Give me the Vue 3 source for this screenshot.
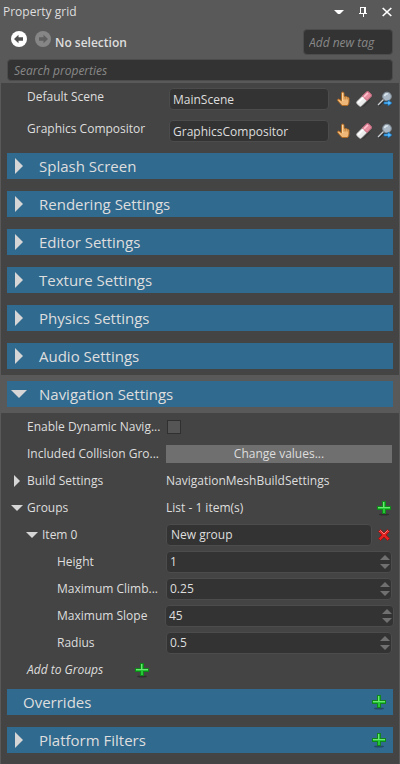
<script setup>
import { ref } from 'vue'

const references = ref([
  { id: 'scene', label: 'Default Scene', value: 'MainScene' },
  { id: 'compositor', label: 'Graphics Compositor', value: 'GraphicsCompositor' },
])
const collapsed = [
  'Splash Screen',
  'Rendering Settings',
  'Editor Settings',
  'Texture Settings',
  'Physics Settings',
  'Audio Settings',
]
const dynamicMesh = ref(false)
const groupName = ref('New group')
const numbers = ref([
  { id: 'height', label: 'Height', value: '1' },
  { id: 'climb', label: 'Maximum Climb...', value: '0.25' },
  { id: 'slope', label: 'Maximum Slope', value: '45', wide: true },
  { id: 'radius', label: 'Radius', value: '0.5' },
])
const step = (item, delta) => {
  item.value = String(Number(item.value) + delta)
}
</script>

<template>
  <main class="window">
    <svg class="sprites" aria-hidden="true">
      <symbol id="right" viewBox="0 0 8 16"><path d="M0 0L8 8L0 16Z" fill="#d6d6d6" /></symbol>
      <symbol id="down" viewBox="0 0 16 8"><path d="M0 0H16L8 8Z" fill="#d6d6d6" /></symbol>
      <symbol id="plus" viewBox="0 0 16 16">
        <ellipse cx="8" cy="14.5" rx="5" ry="1" fill="#000" opacity=".3" />
        <path d="M6 1H10V6H15V10H10V14H6V10H1V6H6Z" fill="#11871b" />
        <path d="M7 2H9V7H14V9H9V13H7V9H2V7H7Z" fill="#25c736" />
        <path d="M7 2H8V7H14V8H7V7H2V8H7Z" fill="#6ae872" />
      </symbol>
      <symbol id="remove" viewBox="0 0 16 16">
        <path d="M4.5 2.5L8 6L11.5 2.5L13.5 4.5L10 8L13.5 11.5L11.5 13.5L8 10L4.5 13.5L2.5 11.5L6 8L2.5 4.5Z" fill="#e32222" stroke="#a01212" />
        <path d="M3.5 4.5L4.5 3.5L8 7L11.5 3.5L12.5 4.5" fill="none" stroke="#f58080" />
      </symbol>
      <symbol id="hand" viewBox="0 0 16 16">
        <path d="M6.5 2.5Q6.5 1 7.7 1Q9 1 9 2.5V5.5Q10 5 10.7 5.8Q11.6 5.3 12.3 6.2Q13.4 5.8 14 7V11Q14 13 12.5 14.5H7L2.7 9.7Q2.3 8 3.7 8L6.5 9.8Z" fill="#f0b878" stroke="#b06a24" />
        <path d="M9 6V8.5M10.7 6V8.5M12.3 6.5V8.5" stroke="#b8762f" stroke-width=".8" />
        <path d="M7.7 2V10" stroke="#ffdba6" stroke-width="1" />
      </symbol>
      <symbol id="eraser" viewBox="0 0 16 16">
        <path d="M4 15H8L14 9" fill="none" stroke="#292929" stroke-width="1.2" opacity=".45" />
        <g transform="rotate(-45 8 8)">
          <rect x="-.3" y="4.8" width="16.6" height="6.4" rx="1.8" fill="#ececec" stroke="#c4c4c4" stroke-width=".6" />
          <path d="M9 4.8H14.5Q16.3 4.8 16.3 6.6V9.4Q16.3 11.2 14.5 11.2H9Z" fill="#e68c9f" stroke="#b84c64" stroke-width=".8" />
          <path d="M9.5 6.5H15" stroke="#ffc2ce" stroke-width="1.6" />
          <path d="M1 6.5H8.6" stroke="#fff" stroke-width="1.6" />
        </g>
      </symbol>
      <symbol id="locate" viewBox="0 0 16 16">
        <path d="M2 15L7 10" stroke="#222" stroke-width="1.5" opacity=".6" />
        <path d="M1 14L6.5 8.5" stroke="#cbd0d4" stroke-width="1.2" />
        <circle cx="10" cy="5.5" r="4.3" fill="#a9b8c4" stroke="#87939d" />
        <path d="M7.5 5Q8 2.7 10.8 2.7" fill="none" stroke="#dce7ef" stroke-width="1.5" />
        <path d="M7 11H11V9L15 12L11 15V13H7Z" fill="#58baff" stroke="#1268ae" stroke-width=".7" />
      </symbol>
    </svg>

    <header class="head">
      <div class="title">
        <h1>Property grid</h1>
        <button class="tool" aria-label="Window menu">
          <svg width="10" height="6" viewBox="0 0 10 6"><path d="M0 1H10L6 5H4Z" fill="#fff" /></svg>
        </button>
        <button class="tool" aria-label="Pin">
          <svg width="8" height="10" viewBox="0 0 8 10" shape-rendering="crispEdges"><path d="M1 0H7V6H8V7H5V10H4V7H0V6H1ZM2 1V6H5V1Z" fill="#fff" fill-rule="evenodd" /></svg>
        </button>
        <button class="tool" aria-label="Close">
          <svg width="10" height="10" viewBox="0 0 10 10"><path d="M.7 1L9.3 9M9.3 1L.7 9" stroke="#fff" stroke-width="1.7" /></svg>
        </button>
      </div>
      <div class="selection">
        <button class="tool" aria-label="Back">
          <svg width="16" height="16" viewBox="0 0 16 16"><circle cx="8" cy="8" r="8" fill="#fff" /><path d="M3 8L7.5 3.7V6.3H12V9.7H7.5V12.3Z" fill="#505050" /></svg>
        </button>
        <button class="tool" aria-label="Forward">
          <svg width="16" height="16" viewBox="0 0 16 16"><circle cx="8" cy="8" r="8" fill="#868686" /><path d="M13 8L8.5 3.7V6.3H4V9.7H8.5V12.3Z" fill="#5f5f5f" /></svg>
        </button>
        <strong>No selection</strong>
        <input class="field tag" placeholder="Add new tag" aria-label="Add new tag">
      </div>
      <input class="field search" placeholder="Search properties" aria-label="Search properties">
    </header>

    <div class="panel">
      <div v-for="item in references" :key="item.id" class="reference">
        <label :for="item.id">{{ item.label }}</label>
        <input :id="item.id" v-model="item.value" class="field">
        <div class="tools">
          <button class="tool" aria-label="Pick asset"><svg class="icon"><use href="#hand" /></svg></button>
          <button class="tool" aria-label="Clear reference"><svg class="icon"><use href="#eraser" /></svg></button>
          <button class="tool" aria-label="Locate asset"><svg class="icon"><use href="#locate" /></svg></button>
        </div>
      </div>

      <section v-for="name in collapsed" :key="name" class="section">
        <button class="bar"><span class="twist"><svg class="closed"><use href="#right" /></svg></span>{{ name }}</button>
      </section>
      <section class="section open">
        <button class="bar" aria-expanded="true"><span class="twist"><svg class="opened"><use href="#down" /></svg></span>Navigation Settings</button>
      </section>

      <div class="row">
        <label class="name" for="dynamic">Enable Dynamic Navig...</label>
        <input id="dynamic" v-model="dynamicMesh" class="check" type="checkbox">
      </div>
      <div class="row">
        <span id="collision" class="name">Included Collision Gro...</span>
        <button class="change" aria-describedby="collision">Change values...</button>
      </div>
      <div class="row">
        <button class="name fold"><span class="small"><svg class="mini-right"><use href="#right" /></svg></span>Build Settings</button>
        <span>NavigationMeshBuildSettings</span>
      </div>
      <div class="row">
        <button class="name fold"><span class="small"><svg class="mini-down"><use href="#down" /></svg></span>Groups</button>
        <span class="grow">List - 1 item(s)</span>
        <button class="tool" aria-label="Add group"><svg class="icon"><use href="#plus" /></svg></button>
      </div>
      <div class="row">
        <button class="name fold nested"><span class="small"><svg class="mini-down"><use href="#down" /></svg></span>Item 0</button>
        <input v-model="groupName" class="field grow" aria-label="Item 0">
        <button class="tool remove" aria-label="Remove group"><svg class="icon"><use href="#remove" /></svg></button>
      </div>
      <div v-for="item in numbers" :key="item.id" class="row" :class="{ wide: item.wide }">
        <label class="name deep" :for="item.id">{{ item.label }}</label>
        <div class="field spinner">
          <input :id="item.id" v-model="item.value" inputmode="decimal">
          <div class="steps">
            <button class="tool" aria-label="Increase" @click="step(item, 1)"><svg width="10" height="5" viewBox="0 0 10 5"><path d="M0 5L5 0L10 5Z" fill="#707070" /></svg></button>
            <button class="tool" aria-label="Decrease" @click="step(item, -1)"><svg width="10" height="5" viewBox="0 0 10 5"><path d="M0 0H10L5 5Z" fill="#707070" /></svg></button>
          </div>
        </div>
      </div>
      <div class="row">
        <em class="add">Add to Groups</em>
        <button class="tool" aria-label="Add to Groups"><svg class="icon"><use href="#plus" /></svg></button>
      </div>

      <section class="section">
        <div class="bar plain"><h2>Overrides</h2><button class="tool" aria-label="Add override"><svg class="icon"><use href="#plus" /></svg></button></div>
      </section>
      <section class="section">
        <div class="bar">
          <button class="heading"><span class="twist"><svg class="closed"><use href="#right" /></svg></span>Platform Filters</button>
          <button class="tool" aria-label="Add platform filter"><svg class="icon"><use href="#plus" /></svg></button>
        </div>
      </section>
    </div>
  </main>
</template>

<style>
body {
  background: #444;
}
</style>

<style scoped>
* {
  box-sizing: border-box;
}
.window {
  min-height: 100vh;
  display: flex;
  flex-direction: column;
  background: #595959;
  color: #dedede;
  font: 12px/16px "Segoe UI", "Open Sans", "Noto Sans", sans-serif;
}
.sprites {
  position: absolute;
  width: 0;
  height: 0;
}
button,
input {
  font: inherit;
  color: inherit;
  margin: 0;
}
button {
  border: 0;
  padding: 0;
  background: none;
}
svg {
  display: block;
}
.tool {
  display: flex;
  align-items: center;
  justify-content: center;
  flex: none;
}
.icon {
  width: 16px;
  height: 16px;
}
.head {
  padding: 0 7px 2px;
}
.title {
  height: 23px;
  display: flex;
  align-items: center;
  gap: 15px;
  padding-right: 1px;
}
.title h1 {
  flex: 1;
  margin: 0 0 0 -4px;
  font-size: 12px;
  font-weight: 400;
}
.selection {
  display: flex;
  align-items: flex-start;
  padding: 6px 0 4px 4px;
}
.selection .tool {
  margin: 2px 8px 0 0;
}
.selection strong {
  flex: 1;
  margin: 6px 0 0 -4px;
  font-weight: 600;
}
.field {
  min-width: 0;
  height: 22px;
  border: 1px solid #4c4c4c;
  border-radius: 4px;
  padding: 0 4px;
  background: #333;
  outline: none;
}
.field::placeholder {
  color: #888;
  opacity: 1;
  font-style: italic;
}
.selection .tag {
  width: 90px;
  height: 26px;
  padding: 0 5px;
}
.search {
  display: block;
  width: 100%;
  padding: 0 6px;
}
.panel {
  flex: 1;
  margin: 0 1px;
  background: #444;
}
.reference {
  height: 32px;
  display: grid;
  grid-template-columns: 136px 1fr 58px;
  column-gap: 6px;
  align-items: center;
  padding: 0 6px 0 26px;
}
.reference .field {
  padding: 0 3px;
}
.reference label {
  padding-bottom: 4px;
  white-space: nowrap;
}
.tools {
  display: flex;
  justify-content: space-between;
}
.section {
  padding: 6px;
}
.open {
  background: #595959;
}
.bar {
  width: 100%;
  height: 26px;
  display: flex;
  align-items: center;
  background: #316a8f;
  font-size: 15px;
  line-height: 24px;
  padding-right: 6px;
}
.plain {
  padding-left: 16px;
}
.bar h2 {
  flex: 1;
  margin: 0;
  font-size: 15px;
  font-weight: 400;
}
.heading {
  display: flex;
  align-items: center;
  flex: 1;
}
.twist {
  width: 32px;
  display: flex;
  padding-left: 4px;
}
.closed {
  width: 8px;
  height: 16px;
  margin-left: 4px;
}
.opened {
  width: 16px;
  height: 8px;
}
.row {
  height: 27px;
  display: flex;
  align-items: center;
  padding: 0 7px 0 26px;
}
.name {
  width: 139px;
  flex: none;
  white-space: nowrap;
  text-align: left;
}
.grow {
  flex: 1;
}
.check {
  appearance: none;
  width: 14px;
  height: 14px;
  margin-left: 1px;
  border: 1px solid #303030;
  background: #555;
}
.check:checked {
  background: #d6d6d6;
}
.change {
  flex: 1;
  height: 18px;
  background: #6f6f6f;
}
.fold {
  display: flex;
  align-items: center;
  width: 155px;
  margin-left: -16px;
}
.nested {
  padding-left: 15px;
}
.small {
  width: 16px;
}
.mini-right {
  width: 6px;
  height: 12px;
  margin-left: 3px;
}
.mini-down {
  width: 12px;
  height: 6px;
}
.remove {
  margin-left: 4px;
}
.deep {
  padding-left: 30px;
}
.spinner {
  flex: 1;
  display: flex;
  align-items: center;
  padding: 0 1px 0 3px;
}
.spinner input {
  flex: 1;
  min-width: 0;
  padding: 0;
  border: 0;
  background: none;
  outline: none;
}
.steps {
  display: grid;
  gap: 4px;
}
.wide {
  padding-right: 5px;
}
.wide .name {
  width: 138px;
}
.add {
  width: 107px;
}
</style>
